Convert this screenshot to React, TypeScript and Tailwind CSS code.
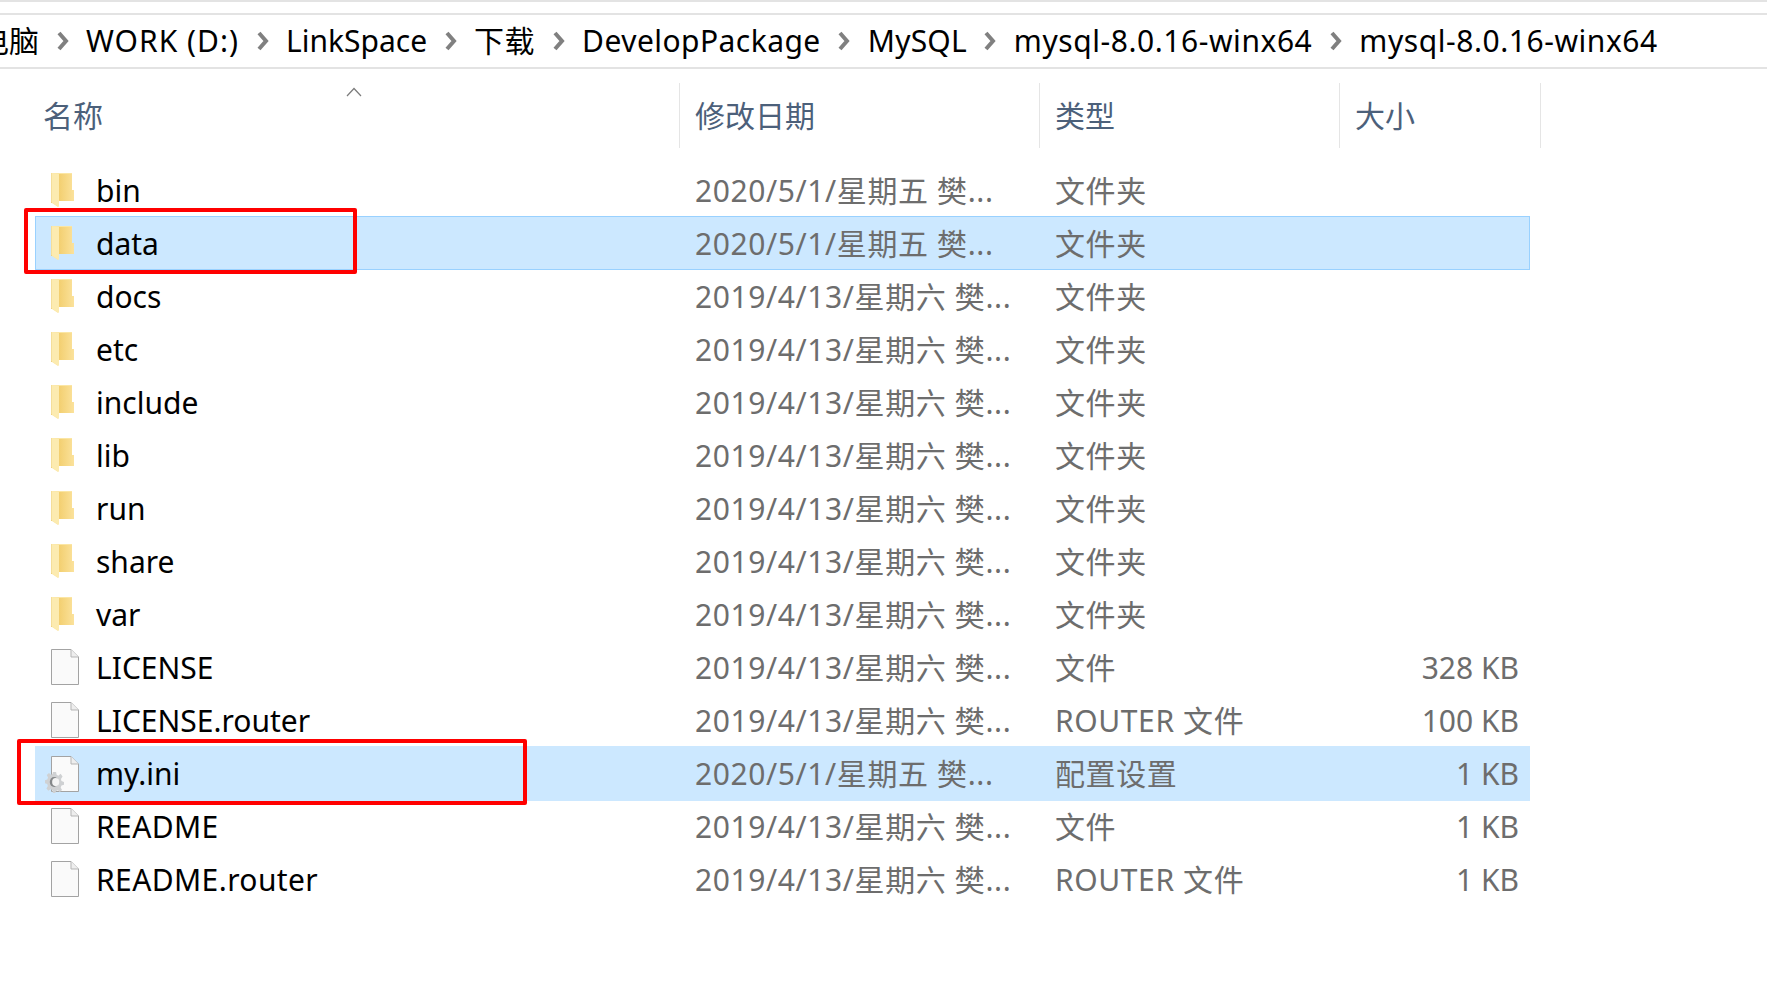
const crumbs = [
  { label: '电脑', cls: '' },
  { label: 'WORK (D:)', cls: 'tracking-[1px]' },
  { label: 'LinkSpace', cls: '' },
  { label: '下载', cls: 'tracking-[0.5px]' },
  { label: 'DevelopPackage', cls: 'tracking-[0.45px]' },
  { label: 'MySQL', cls: 'tracking-[0.2px]' },
  { label: 'mysql-8.0.16-winx64', cls: 'tracking-[0.55px]' },
  { label: 'mysql-8.0.16-winx64', cls: 'tracking-[0.55px]' },
];

const rows = [
  { name: 'bin', date: '2020/5/1/星期五 樊...', type: '文件夹', size: '', icon: 'folder' },
  { name: 'data', date: '2020/5/1/星期五 樊...', type: '文件夹', size: '', icon: 'folder', selected: 'border', box: 'data' },
  { name: 'docs', date: '2019/4/13/星期六 樊...', type: '文件夹', size: '', icon: 'folder' },
  { name: 'etc', date: '2019/4/13/星期六 樊...', type: '文件夹', size: '', icon: 'folder' },
  { name: 'include', date: '2019/4/13/星期六 樊...', type: '文件夹', size: '', icon: 'folder' },
  { name: 'lib', date: '2019/4/13/星期六 樊...', type: '文件夹', size: '', icon: 'folder' },
  { name: 'run', date: '2019/4/13/星期六 樊...', type: '文件夹', size: '', icon: 'folder' },
  { name: 'share', date: '2019/4/13/星期六 樊...', type: '文件夹', size: '', icon: 'folder' },
  { name: 'var', date: '2019/4/13/星期六 樊...', type: '文件夹', size: '', icon: 'folder' },
  { name: 'LICENSE', date: '2019/4/13/星期六 樊...', type: '文件', size: '328 KB', icon: 'file' },
  { name: 'LICENSE.router', date: '2019/4/13/星期六 樊...', type: 'ROUTER 文件', size: '100 KB', icon: 'file' },
  { name: 'my.ini', date: '2020/5/1/星期五 樊...', type: '配置设置', size: '1 KB', icon: 'ini', selected: 'plain', box: 'ini' },
  { name: 'README', date: '2019/4/13/星期六 樊...', type: '文件', size: '1 KB', icon: 'file' },
  { name: 'README.router', date: '2019/4/13/星期六 樊...', type: 'ROUTER 文件', size: '1 KB', icon: 'file' },
];

function FolderIcon() {
  return (
    <svg width="24" height="35" viewBox="0 0 24 35" className="mt-[1px]">
      <defs>
        <linearGradient id="folderFront" x1="0" y1="0" x2="1" y2="0">
          <stop offset="0" stopColor="#f3cf70" />
          <stop offset="1" stopColor="#fbe29c" />
        </linearGradient>
      </defs>
      <path d="M0 0H21V17H23V28H7V34L1 30H0Z" fill="#fbe6a4" />
      <path d="M8 1H21V17H23V28H8Z" fill="url(#folderFront)" />
      <path d="M0 0L8 1V34L0 29Z" fill="#fcebb0" />
      <path d="M0 0V29L1 30" fill="none" stroke="#eccb78" strokeWidth="0.8" />
    </svg>
  );
}

function FileIcon({ gear }: { gear?: boolean }) {
  return (
    <div className="relative h-[36px] w-[28px]">
      <svg width="28" height="36" viewBox="0 0 28 36">
        <path d="M0.5 0.5H20L27.5 8V35.5H0.5Z" fill="#fafafa" stroke="#a3a3a3" />
        <path d="M20 0.5V8H27.5" fill="#eeeeee" stroke="#b5b5b5" />
      </svg>
      {gear && (
        <svg width="19" height="22" viewBox="0 0 24 24" preserveAspectRatio="none" className="absolute left-[-6px] top-[15px]">
          <path
            d="M10 1h4l.7 3.2 2.2.9L19.7 3l2.5 3-2 2.6.6 2.4L24 12v3l-3.2.8-1 2.2 1.7 2.8-2.8 2.2-2.4-2-2.3.8L13 24h-3l-.8-3.2-2.2-1-2.8 1.8L1.8 19l1.8-2.6-.8-2.3L0 13.4V10l2.9-.7.9-2.3L2.2 4.4 5 2.2l2.5 1.9 2-.8Z"
            fill="#cfd1d3"
          />
          <circle cx="11.5" cy="12" r="5.5" fill="#85888a" />
          <circle cx="13.5" cy="12" r="4.5" fill="#f4f4f4" />
        </svg>
      )}
    </div>
  );
}

export default function App() {
  return (
    <div className="h-[983px] w-[1767px] overflow-hidden bg-white font-['Noto_Sans','Noto_Sans_CJK_SC',sans-serif] text-[30px]">
      <div className="h-[2px] bg-[#e3e3e3]" />

      {/* Address bar */}
      <div className="mt-[11px] flex h-[56px] items-center border-y-2 border-[#e3e3e3] text-black">
        <div className="ml-[-21px] flex items-center whitespace-nowrap">
          {crumbs.map((c, i) => (
            <div key={i} className="flex items-center">
              {i > 0 && (
                <div className="flex w-[47px] justify-center">
                  <svg width="12" height="20" viewBox="0 0 12 20">
                    <path d="M2 2L9 10L2 18" fill="none" stroke="#808080" strokeWidth="4" />
                  </svg>
                </div>
              )}
              <span className={'leading-none ' + c.cls}>{c.label}</span>
            </div>
          ))}
        </div>
      </div>

      {/* Column headers */}
      <div className="relative mt-[14px] flex h-[65px] text-[#4c607a]">
        <div className="flex w-[680px] items-center border-r border-[#e5e5e5] pl-[43px]">名称</div>
        <svg width="16" height="10" viewBox="0 0 16 10" className="absolute left-[346px] top-[4px]">
          <path d="M1 9L8 1.5L15 9" fill="none" stroke="#7b7b7b" strokeWidth="1.2" />
        </svg>
        <div className="flex w-[360px] items-center border-r border-[#e5e5e5] pl-[15px]">修改日期</div>
        <div className="flex w-[300px] items-center border-r border-[#e5e5e5] pl-[15px]">类型</div>
        <div className="flex w-[201px] items-center border-r border-[#e5e5e5] pl-[15px]">大小</div>
      </div>

      {/* File list */}
      <div className="ml-[35px] mt-[15px] w-[1495px]">
        {rows.map((r) => (
          <div
            key={r.name}
            className={
              'relative flex items-center ' +
              (r.selected === 'border'
                ? 'z-10 mb-[-1px] h-[54px] border border-[#99d1ff] bg-[#cce8ff]'
                : r.selected === 'plain'
                  ? 'mb-[-2px] h-[55px] bg-[#cce8ff]'
                  : 'h-[53px]')
            }
          >
            <div className={'flex shrink-0 items-center ' + (r.selected === 'border' ? 'w-[60px] pl-[15px]' : 'w-[61px] pl-[16px]')}>
              {r.icon === 'folder' ? <FolderIcon /> : <FileIcon gear={r.icon === 'ini'} />}
            </div>
            <div className={'w-[599px] shrink-0 text-black ' + (r.selected ? '' : 'pt-[2px] ') + (r.name.startsWith('README') ? 'tracking-[0.4px]' : '')}>{r.name}</div>
            <div className={'w-[360px] shrink-0 whitespace-nowrap tracking-[0.6px] text-[#6d6d6d] ' + (r.selected ? '' : 'pt-[2px]')}>{r.date}</div>
            <div className={'w-[300px] shrink-0 whitespace-nowrap tracking-[0.6px] text-[#6d6d6d] ' + (r.selected ? '' : 'pt-[2px]')}>{r.type}</div>
            <div className={'flex-1 pr-[11px] text-right text-[#6d6d6d] ' + (r.selected ? '' : 'pt-[2px]')}>{r.size}</div>
            {r.box === 'data' && (
              <div className="absolute left-[-12px] top-[-9px] h-[66px] w-[333px] rounded-[2px] border-4 border-[#ff0000]" />
            )}
            {r.box === 'ini' && (
              <div className="absolute left-[-18px] top-[-7px] h-[66px] w-[510px] rounded-[2px] border-4 border-[#ff0000]" />
            )}
          </div>
        ))}
      </div>
    </div>
  );
}
